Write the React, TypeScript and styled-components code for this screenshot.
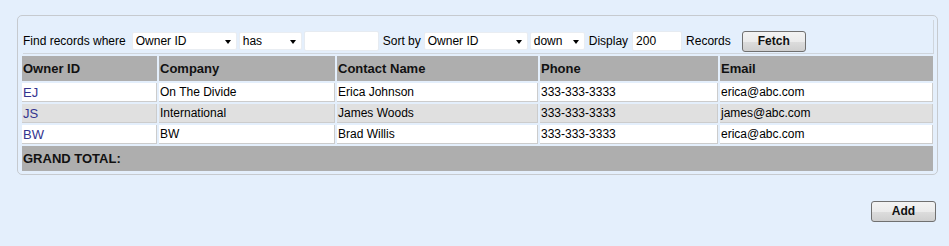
import React from 'react'
import styled, { createGlobalStyle } from 'styled-components'

interface IRecord {
  ownerId: string
  company: string
  contact: string
  phone: string
  email: string
}

const records: IRecord[] = [
  { ownerId: 'EJ', company: 'On The Divide', contact: 'Erica Johnson', phone: '333-333-3333', email: 'erica@abc.com' },
  { ownerId: 'JS', company: 'International', contact: 'James Woods', phone: '333-333-3333', email: 'james@abc.com' },
  { ownerId: 'BW', company: 'BW', contact: 'Brad Willis', phone: '333-333-3333', email: 'erica@abc.com' },
]

const columns = [
  { title: 'Owner ID', width: 135 },
  { title: 'Company', width: 176 },
  { title: 'Contact Name', width: 201 },
  { title: 'Phone', width: 178 },
  { title: 'Email', width: 213 },
]

export default class App extends React.Component {
  public render() {
    return (
      <Page>
        <GlobalStyle />
        <Panel>
          <Toolbar>
            <Label>Find records where</Label>
            <Select $w={105} $ml={6}>Owner ID</Select>
            <Select $w={63} $ml={2}>has</Select>
            <TextBox $w={75} $ml={2} />
            <Label $ml={4}>Sort by</Label>
            <Select $w={104} $ml={3}>Owner ID</Select>
            <Select $w={55} $ml={2}>down</Select>
            <Label $ml={4}>Display</Label>
            <TextBox $w={50} $ml={4}>200</TextBox>
            <Label $ml={4}>Records</Label>
            <Button $ml={11}>Fetch</Button>
          </Toolbar>
          <Table>
            <colgroup>
              {columns.map((c) => (
                <col key={c.title} style={{ width: c.width }} />
              ))}
            </colgroup>
            <thead>
              <tr>
                {columns.map((c) => (
                  <Th key={c.title}>{c.title}</Th>
                ))}
              </tr>
            </thead>
            <tbody>
              {records.map((r, i) => (
                <Row key={r.ownerId} $alt={i % 2 === 1}>
                  <Td>
                    <OwnerLink>{r.ownerId}</OwnerLink>
                  </Td>
                  <Td>{r.company}</Td>
                  <Td>{r.contact}</Td>
                  <Td>{r.phone}</Td>
                  <Td>{r.email}</Td>
                </Row>
              ))}
              <tr>
                <Th colSpan={5}>GRAND TOTAL:</Th>
              </tr>
            </tbody>
          </Table>
        </Panel>
        <Footer>
          <Button $w={65}>Add</Button>
        </Footer>
      </Page>
    )
  }
}

const GlobalStyle = createGlobalStyle`
  html, body {
    margin: 0;
    padding: 0;
    background: #e4effc;
  }
  body {
    font-family: "Liberation Sans", Arial, sans-serif;
    font-size: 12px;
    color: #000;
  }
`

const Page = styled.div`
  padding-top: 15px;
  height: 246px;
  box-sizing: border-box;
`

const Panel = styled.div`
  margin-left: 17px;
  width: 921px;
  box-sizing: border-box;
  border: 1px solid #c6cacf;
  border-radius: 5px;
  padding: 4px 1px 1px 1px;
`

const Toolbar = styled.div`
  display: flex;
  align-items: center;
  height: 34px;
  box-sizing: border-box;
  margin: 0 2px 0 4px;
  padding: 10px 0 1px 0;
  border-right: 1px solid #cfd5dc;
  border-bottom: 1px solid #cfd5dc;
`

const Label = styled.span<{ $ml?: number }>`
  margin-left: ${(p) => p.$ml || 0}px;
  white-space: nowrap;
  line-height: 18px;
`

const Select = styled.div<{ $w: number; $ml: number }>`
  position: relative;
  width: ${(p) => p.$w}px;
  height: 18px;
  margin-left: ${(p) => p.$ml}px;
  box-sizing: border-box;
  background: #fff;
  border: 1px solid #e9edf2;
  border-radius: 2px;
  padding-left: 3px;
  line-height: 16px;
  white-space: nowrap;

  &::after {
    content: '';
    position: absolute;
    right: 5px;
    top: 7px;
    border-top: 4px solid #000;
    border-left: 3.5px solid transparent;
    border-right: 3.5px solid transparent;
  }
`

const TextBox = styled.div<{ $w: number; $ml: number }>`
  width: ${(p) => p.$w}px;
  height: 20px;
  margin-left: ${(p) => p.$ml}px;
  box-sizing: border-box;
  background: #fff;
  border: 1px solid #e6ebf1;
  border-radius: 2px;
  padding-left: 3px;
  line-height: 18px;
`

const Button = styled.div<{ $w?: number; $ml?: number }>`
  width: ${(p) => p.$w || 64}px;
  height: 21px;
  margin-left: ${(p) => p.$ml || 0}px;
  box-sizing: border-box;
  border: 1px solid #707070;
  border-radius: 3px;
  background: linear-gradient(#f3f3f3, #ebebeb 50%, #dddddd 51%, #cfcfcf);
  font-weight: bold;
  font-size: 12px;
  text-align: center;
  line-height: 19px;
  color: #111;
`

const Table = styled.table`
  width: 915px;
  margin: 0 0 0 1px;
  table-layout: fixed;
  border-collapse: separate;
  border-spacing: 2px;
`

const Th = styled.th`
  height: 25px;
  box-sizing: border-box;
  padding: 0 1px;
  background: #aeaeae;
  font-size: 13px;
  font-weight: bold;
  text-align: left;
  color: #111;
`

const Row = styled.tr<{ $alt: boolean }>`
  background: ${(p) => (p.$alt ? '#e0e0e0' : '#ffffff')};
`

const Td = styled.td`
  height: 19px;
  box-sizing: border-box;
  padding: 0 1px;
  border-right: 1px solid #cccccc;
  border-bottom: 1px solid #cccccc;
  white-space: nowrap;
  overflow: hidden;
`

const OwnerLink = styled.span`
  color: #34348f;
  font-size: 13px;
`

const Footer = styled.div`
  display: flex;
  justify-content: flex-end;
  padding-right: 13px;
  margin-top: 26px;
`
